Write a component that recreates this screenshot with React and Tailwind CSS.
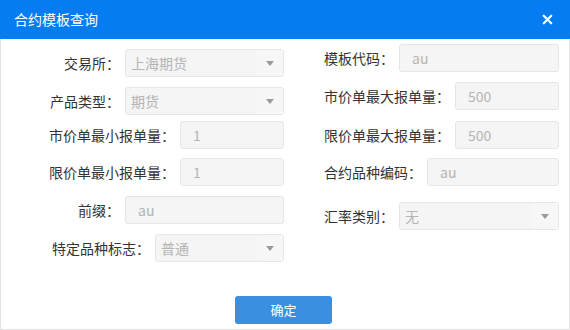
import { X } from "lucide-react";

const font = { fontFamily: '"Microsoft YaHei", "Noto Sans CJK SC", sans-serif' };

// 只读输入框
const Field = ({ value, select, className = "" }) => (
    <div className={`flex h-[28px] items-center rounded-[3px] border border-[#e6e6e6] bg-[#f5f5f5] ${className}`}>
        <span className={`flex-1 truncate text-[14px] text-[#b4b4b4] ${select ? "pl-[5px]" : "pl-[12px]"}`}>{value}</span>
        {select ? (
            <span className="flex h-full w-[26px] items-center justify-center bg-[#f7f7f7]">
                <span className="h-0 w-0 border-x-[4px] border-t-[5px] border-x-transparent border-t-[#9a9a9a]" />
            </span>
        ) : null}
    </div>
);

const LeftRow = ({ label, value, w, select, mt }) => (
    <div className={`flex items-center justify-end gap-[5px] ${mt}`}>
        <span className="whitespace-nowrap text-[14px] text-[#333]">{label}</span>
        <Field value={value} select={select} className={w} />
    </div>
);

const RightRow = ({ label, value, select, mt }) => (
    <div className={`flex items-center gap-[5px] ${mt}`}>
        <span className="whitespace-nowrap text-[14px] text-[#333]">{label}</span>
        <Field value={value} select={select} className="flex-1" />
    </div>
);

export default function App() {
    return (
        <div style={font} className="flex h-[330px] w-[570px] flex-col bg-white">
            <div className="flex h-[39px] shrink-0 items-center justify-between bg-[#067cf2] pl-[14px] pr-[15px] text-white">
                <span className="text-[14px]">合约模板查询</span>
                <X size={15} strokeWidth={3.5} />
            </div>
            <div className="flex flex-1 flex-col border-x border-b border-[#e3e3e3]">
                <div className="flex">
                    <div className="flex w-[283px] flex-col pt-[10px]">
                        <LeftRow label="交易所：" value="上海期货" w="w-[159px]" select mt="" />
                        <LeftRow label="产品类型：" value="期货" w="w-[159px]" select mt="mt-[10px]" />
                        <LeftRow label="市价单最小报单量：" value="1" w="w-[104px]" mt="mt-[6px]" />
                        <LeftRow label="限价单最小报单量：" value="1" w="w-[104px]" mt="mt-[9px]" />
                        <LeftRow label="前缀：" value="au" w="w-[159px]" mt="mt-[10px]" />
                        <LeftRow label="特定品种标志：" value="普通" w="w-[129px]" select mt="mt-[10px]" />
                    </div>
                    <div className="flex flex-1 flex-col pl-[40px] pr-[10px] pt-[5px]">
                        <RightRow label="模板代码：" value="au" mt="" />
                        <RightRow label="市价单最大报单量：" value="500" mt="mt-[10px]" />
                        <RightRow label="限价单最大报单量：" value="500" mt="mt-[11px]" />
                        <RightRow label="合约品种编码：" value="au" mt="mt-[9px]" />
                        <RightRow label="汇率类别：" value="无" select mt="mt-[16px]" />
                    </div>
                </div>
                <div className="mt-[34px] flex justify-center">
                    <button className="ml-[-3px] h-[28px] w-[97px] rounded-[3px] bg-[#3b8fe0] text-[13px] text-white">
                        确定
                    </button>
                </div>
            </div>
        </div>
    );
}
